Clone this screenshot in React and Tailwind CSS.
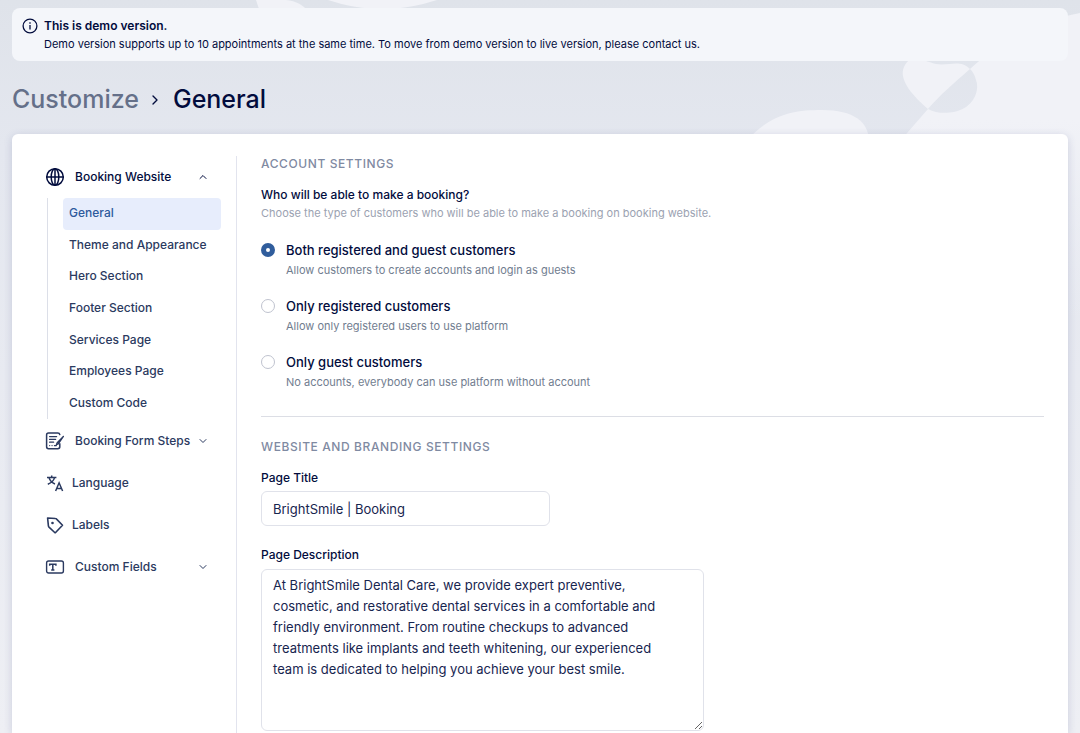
import { useState } from 'react'
import { ChevronDown, ChevronRight, ChevronUp } from 'lucide-react'

const bookingLinks = [
  'General',
  'Theme and Appearance',
  'Hero Section',
  'Footer Section',
  'Services Page',
  'Employees Page',
  'Custom Code',
]

const customerTypes = [
  { id: 'both', title: 'Both registered and guest customers', text: 'Allow customers to create accounts and login as guests' },
  { id: 'registered', title: 'Only registered customers', text: 'Allow only registered users to use platform' },
  { id: 'guest', title: 'Only guest customers', text: 'No accounts, everybody can use platform without account' },
]

function InfoIcon() {
  return (
    <svg className="w-4 h-4 shrink-0" viewBox="0 0 16 16" fill="none" stroke="currentColor" strokeWidth="1.3">
      <circle cx="8" cy="8" r="6.9" />
      <path d="M8 7v4.6" />
      <path d="M8 4.2v1.5" />
    </svg>
  )
}

function GlobeIcon() {
  return (
    <svg className="w-5 h-5 shrink-0" viewBox="0 0 20 20" fill="none" stroke="currentColor" strokeWidth="1.5">
      <circle cx="10" cy="10" r="8.3" />
      <ellipse cx="10" cy="10" rx="3.8" ry="8.3" />
      <path d="M1.7 10h16.6M10 1.7v16.6" />
    </svg>
  )
}

function FormIcon() {
  return (
    <svg className="w-5 h-5 shrink-0" viewBox="0 0 20 20" fill="none" stroke="currentColor" strokeWidth="1.5" strokeLinecap="round">
      <path d="M14.8 3.6c-.2-1-.9-1.6-2-1.6H3.5C2.3 2 1.6 2.8 1.6 3.9v11.9c0 1.2.8 1.9 1.9 1.9h9.3c1.2 0 2-.7 2-1.9v-3" />
      <path d="M4.6 5.6h7M4.6 8.4h6M4.6 11.2h4" strokeWidth="1.3" />
      <path d="M4.6 14.6h.1M7 14.6h.1M9.4 14.6h2" strokeWidth="1.2" />
      <path d="M18.4 5.4l-6.2 6.3-.8 1.9 1.9-.8z" strokeWidth="1.3" strokeLinejoin="round" />
    </svg>
  )
}

function TranslateIcon() {
  return (
    <svg className="w-5 h-5 shrink-0" viewBox="0 0 20 20" fill="none" stroke="currentColor" strokeWidth="1.5">
      <path d="M2 4.4h9.4M6.7 2.4v2M9.6 4.6C8.6 7.8 6 10 2.8 11.3M3.9 4.6C5 7.8 7.2 9.9 10 11" />
      <path d="M10.6 18l3.5-8.2 3.5 8.2M11.8 15.4h4.6" />
    </svg>
  )
}

function LabelIcon() {
  return (
    <svg className="w-5 h-5 shrink-0" viewBox="0 0 20 20" fill="none" stroke="currentColor" strokeWidth="1.6" strokeLinejoin="round">
      <path d="M2.6 3l7.8.5c.5 0 .9.2 1.2.6l5.9 6.2-6.9 7.2c-.3.3-.6.3-.9 0l-5.7-5.4c-.4-.4-.6-.8-.6-1.3z" />
      <circle cx="7.5" cy="8" r="1.3" fill="currentColor" stroke="none" />
    </svg>
  )
}

function FieldIcon() {
  return (
    <svg className="w-5 h-5 shrink-0" viewBox="0 0 20 20" fill="none" stroke="currentColor" strokeWidth="1.4">
      <rect x="1.6" y="4" width="16.8" height="12" rx="2" />
      <path d="M4.7 8.8V7.2h6.2v1.6M7.8 7.2v6M6.2 13h3.2" strokeWidth="1.5" />
    </svg>
  )
}

function Backdrop() {
  return (
    <svg className="absolute top-0 right-0 w-[1080px] h-[500px]" viewBox="0 0 1080 500" fill="#f1f2f7" aria-hidden="true">
      <defs>
        <linearGradient id="fade" gradientUnits="userSpaceOnUse" x1="0" y1="120" x2="0" y2="320">
          <stop offset="0" stopColor="#f1f2f7" />
          <stop offset="1" stopColor="#f1f2f7" stopOpacity="0" />
        </linearGradient>
      </defs>
      <path d="M256 0H286C296 1 304 5 308 12H260z" />
      <path d="M328 0H437C400 12 364 12 328 0z" />
      <path d="M747 140C772 114 793 110 822 110C854 110 868 122 869 140z" />
      <path
        fill="url(#fade)"
        d="M901 140L928 109C936 114 948 113 954 112C974 108 980 90 976 80C974 73 972 71 970 69C1002 40 1040 20 1080 13V500H901z"
      />
      <path d="M928 109C914 97 898 80 904 67C911 52 922 61 936 64C950 66 960 59 970 69C955 82 940 95 928 109z" />
    </svg>
  )
}

function Sidebar() {
  const [active, setActive] = useState('General')
  const [open, setOpen] = useState(true)

  return (
    <nav className="w-[225px] shrink-0 border-r border-[#e2e4ee] pl-[33px] pr-[15px] text-xs font-medium text-[#2b3a60] whitespace-nowrap">
      <button className="flex items-center w-full h-[42px] text-[#020c3d]" onClick={() => setOpen(!open)}>
        <GlobeIcon />
        <span className="ml-[10px]">Booking Website</span>
        <ChevronUp className="w-3 h-3 ml-auto mr-3" />
      </button>
      {open && (
        <ul className="grid h-[221px] mb-px ml-[2px] pl-[15px] border-l border-[#dcdfe8]">
          {bookingLinks.map(link => (
            <li key={link} className="grid">
              <a
                href="#"
                className={`flex items-center px-[6px] pb-px rounded ${link === active ? 'bg-[#e7edfc] text-[#2e5a9c]' : ''}`}
                onClick={() => setActive(link)}
              >
                {link}
              </a>
            </li>
          ))}
        </ul>
      )}
      <button className="flex items-center w-full h-[42px]">
        <FormIcon />
        <span className="ml-[10px]">Booking Form Steps</span>
        <ChevronDown className="w-3 h-3 ml-auto mr-3" />
      </button>
      <a href="#" className="flex items-center h-[42px]">
        <TranslateIcon />
        <span className="ml-[7px]">Language</span>
      </a>
      <a href="#" className="flex items-center h-[42px]">
        <LabelIcon />
        <span className="ml-[7px]">Labels</span>
      </a>
      <button className="flex items-center w-full h-[42px]">
        <FieldIcon />
        <span className="ml-[10px]">Custom Fields</span>
        <ChevronDown className="w-3 h-3 ml-auto mr-3" />
      </button>
    </nav>
  )
}

export default function App() {
  const [customers, setCustomers] = useState('both')

  return (
    <div className="relative min-h-screen flex flex-col px-3 pt-2 overflow-hidden bg-linear-to-b from-[#dfe3ea] via-[#e4e7ef] via-20% to-[#eeeff4] font-['Inter',sans-serif] text-[#020c3d]">
      <Backdrop />

      {/* Demo notice */}
      <div className="relative flex gap-[6px] rounded-lg bg-[#f4f6fa] pl-[10px] pr-4 pt-[9px] pb-[7px]">
        <div className="pt-px"><InfoIcon /></div>
        <div>
          <p className="text-xs leading-[18px] font-semibold">This is demo version.</p>
          <p className="text-[11px] leading-[19px]">
            Demo version supports up to 10 appointments at the same time. To move from demo version to live version, please contact us.
          </p>
        </div>
      </div>

      <h1 className="relative flex items-center h-[73px] pt-1 text-[25px] font-medium">
        <span className="text-[#657089]">Customize</span>
        <ChevronRight className="w-4 h-4 ml-2 mr-[10px]" />
        <span>General</span>
      </h1>

      <main className="relative flex flex-1 rounded-t-md bg-white pt-[22px] shadow-[0_2px_8px_rgba(60,70,130,0.2)]">
        <Sidebar />

        <div className="flex-1 px-6">
          <section className="pb-6 border-b border-[#dcdee5]">
            <h2 className="text-xs leading-4 font-medium tracking-wider text-[#7f8aa2]">ACCOUNT SETTINGS</h2>
            <p className="mt-[13px] text-xs leading-5 font-medium">Who will be able to make a booking?</p>
            <p className="text-[11px] leading-4 text-[#9ba2b1]">
              Choose the type of customers who will be able to make a booking on booking website.
            </p>

            <div className="mt-[19px] flex flex-col gap-4">
              {customerTypes.map(type => (
                <label key={type.id} className="flex gap-[11px]">
                  <input
                    type="radio"
                    name="customers"
                    className="appearance-none w-[14px] h-[14px] mt-[3px] shrink-0 rounded-full border border-[#bfc3cf] bg-white checked:border-[5px] checked:border-[#305d9c]"
                    checked={customers === type.id}
                    onChange={() => setCustomers(type.id)}
                  />
                  <span>
                    <span className="block text-[13px] leading-5 font-medium">{type.title}</span>
                    <span className="block text-[11px] leading-5 text-[#717d8f]">{type.text}</span>
                  </span>
                </label>
              ))}
            </div>
          </section>

          <section className="pt-[22px]">
            <h2 className="text-xs leading-4 font-medium tracking-wider text-[#7f8aa2]">WEBSITE AND BRANDING SETTINGS</h2>
            <label htmlFor="page-title" className="block mt-[13px] text-xs leading-5 font-medium">Page Title</label>
            <input
              id="page-title"
              defaultValue="BrightSmile | Booking"
              className="block mt-[3px] w-[289px] h-[35px] px-[11px] rounded-md border border-[#e0e2ea] text-[13px] text-[#17254f]"
            />
            <label htmlFor="page-description" className="block mt-[19px] text-xs leading-5 font-medium">Page Description</label>
            <textarea
              id="page-description"
              className="block mt-1 w-[443px] h-[162px] pl-[11px] pr-6 py-[5px] rounded-md border border-[#e0e2ea] text-[13px] leading-[21px] text-[#17254f] resize"
              defaultValue="At BrightSmile Dental Care, we provide expert preventive, cosmetic, and restorative dental services in a comfortable and friendly environment. From routine checkups to advanced treatments like implants and teeth whitening, our experienced team is dedicated to helping you achieve your best smile."
            />
          </section>
        </div>
      </main>
    </div>
  )
}
